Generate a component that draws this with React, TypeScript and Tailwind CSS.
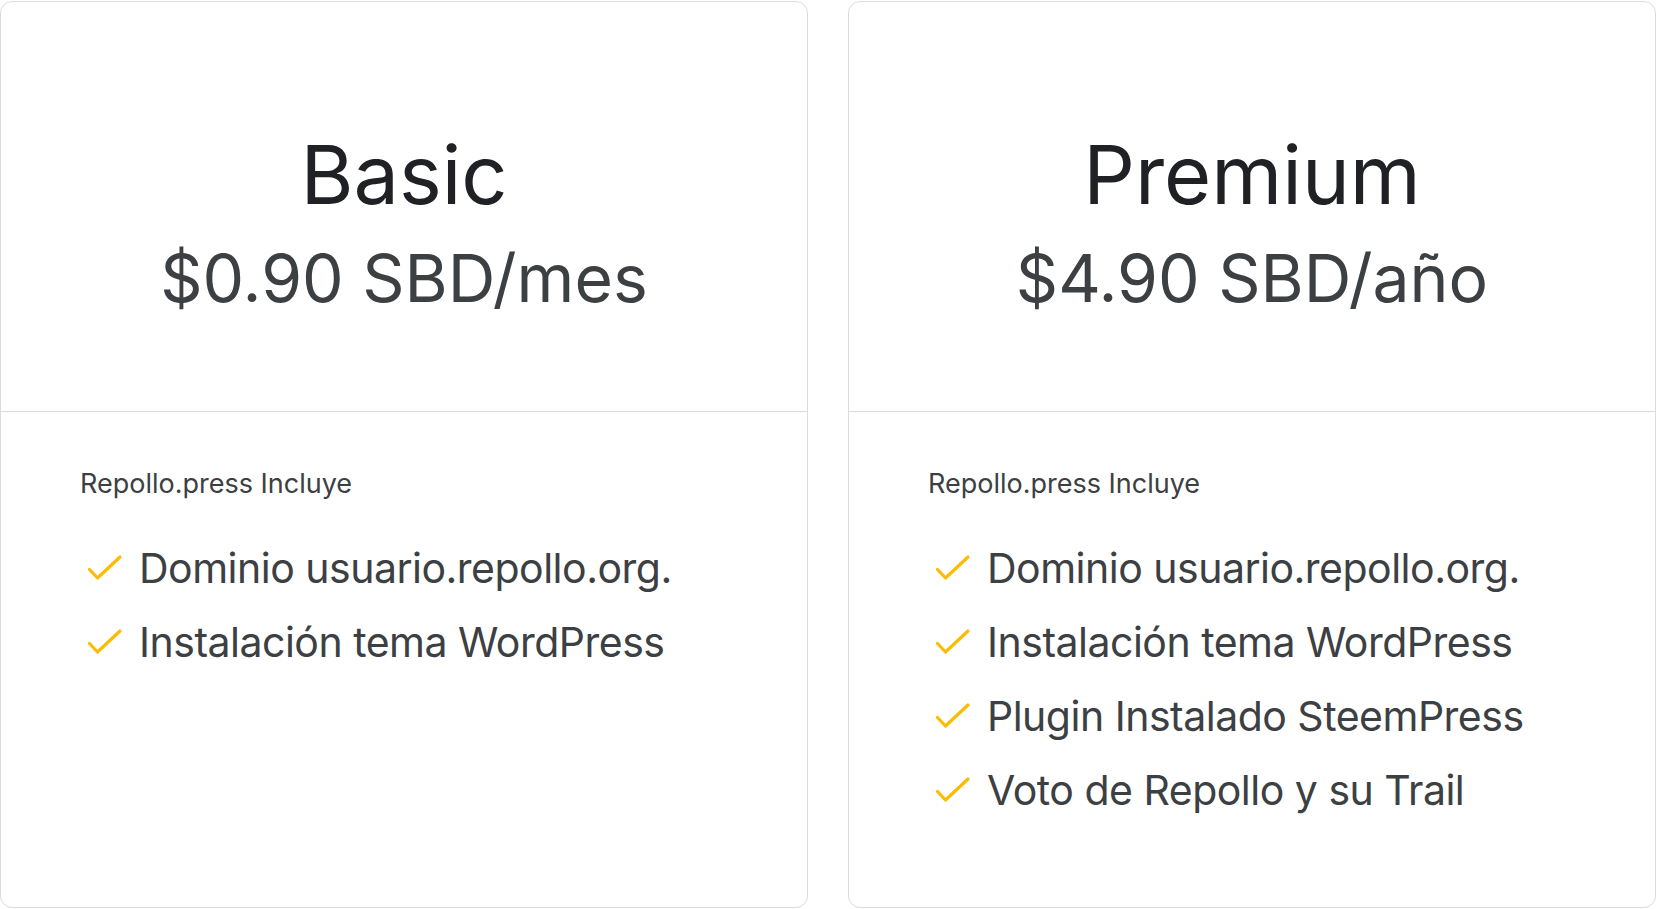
const plans = [
  {
    name: "Basic",
    price: "$0.90 SBD/mes",
    features: ["Dominio usuario.repollo.org.", "Instalación tema WordPress"],
  },
  {
    name: "Premium",
    price: "$4.90 SBD/año",
    features: [
      "Dominio usuario.repollo.org.",
      "Instalación tema WordPress",
      "Plugin Instalado SteemPress",
      "Voto de Repollo y su Trail",
    ],
  },
];

function Check() {
  return (
    <svg className="w-[36px] h-[28px] shrink-0" viewBox="0 0 36 28" fill="none">
      <path d="M2.5 15.5 L10.5 24 L33 3" stroke="#fbbc04" strokeWidth={3.2} strokeLinecap="round" strokeLinejoin="round" />
    </svg>
  );
}

export default function App() {
  return (
    <div
      className="w-[1657px] h-[909px] bg-white grid grid-cols-2 gap-[40px] pt-px pr-px"
      style={{ fontFamily: "Inter, 'Noto Sans', sans-serif" }}
    >
      {plans.map((plan) => (
        <div key={plan.name} className="h-[907px] rounded-xl border border-[#dadce0] flex flex-col overflow-hidden">
          {/* Header */}
          <div className="h-[410px] border-b border-[#dadce0] flex flex-col items-center pt-[133px]">
            <h2 className="text-[81px] leading-none text-[#202124]">{plan.name}</h2>
            <p className="mt-[29px] text-[66px] leading-none text-[#3c4043]">{plan.price}</p>
          </div>

          {/* Features */}
          <div className="pl-[79px] pt-[58px]">
            <p className="text-[27px] leading-none text-[#3c4043]">Repollo.press Incluye</p>
            <ul className="mt-[34px]">
              {plan.features.map((f) => (
                <li key={f} className="flex items-center gap-[16px] h-[74px] pl-[7px]">
                  <Check />
                  <span className="text-[41px] leading-none text-[#3c4043] tracking-[-0.5px]">{f}</span>
                </li>
              ))}
            </ul>
          </div>
        </div>
      ))}
    </div>
  );
}
